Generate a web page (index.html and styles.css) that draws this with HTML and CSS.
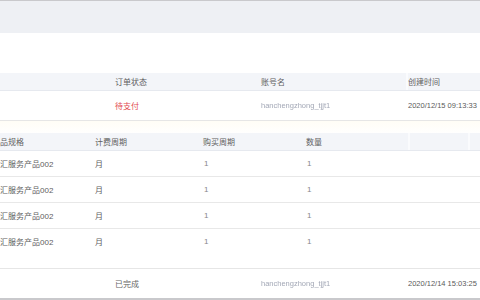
FILE: index.html
```html
<!DOCTYPE html>
<html lang="zh-CN">
<head>
    <meta charset="UTF-8">
    <title>订单列表</title>
    <link rel="stylesheet" href="styles.css">
</head>
<body>
    <div class="topbar"></div>
    <div class="spacer"></div>

    <div class="order-grid head">
        <div></div>
        <div>订单状态</div>
        <div>账号名</div>
        <div class="sep">创建时间</div>
    </div>
    <div class="order-grid row">
        <div></div>
        <div class="unpaid">待支付</div>
        <div><span class="blurred">hanchengzhong_tjjt1</span></div>
        <div class="time">2020/12/15 09:13:33</div>
    </div>

    <div class="detail">
        <div class="item-grid head">
            <div>品规格</div>
            <div>计费周期</div>
            <div>购买周期</div>
            <div>数量</div>
            <div class="sep"></div>
            <div class="sep"></div>
        </div>
        <div class="item-grid row">
            <div>汇服务产品002</div>
            <div>月</div>
            <div class="num">1</div>
            <div class="num">1</div>
            <div></div>
            <div></div>
        </div>
        <div class="item-grid row">
            <div>汇服务产品002</div>
            <div>月</div>
            <div class="num">1</div>
            <div class="num">1</div>
            <div></div>
            <div></div>
        </div>
        <div class="item-grid row">
            <div>汇服务产品002</div>
            <div>月</div>
            <div class="num">1</div>
            <div class="num">1</div>
            <div></div>
            <div></div>
        </div>
        <div class="item-grid row last">
            <div>汇服务产品002</div>
            <div>月</div>
            <div class="num">1</div>
            <div class="num">1</div>
            <div></div>
            <div></div>
        </div>
    </div>

    <div class="order-grid row done">
        <div></div>
        <div>已完成</div>
        <div><span class="blurred">hanchengzhong_tjjt1</span></div>
        <div class="time">2020/12/14 15:03:25</div>
    </div>
    <div class="bottombar"></div>
</body>
</html>
```

FILE: styles.css
```css
body {
    margin: 0;
    font-family: "Liberation Sans", "Noto Sans CJK SC", sans-serif;
    font-size: 8px;
    color: #666;
    background: #ffffff;
    overflow: hidden;
}

.topbar {
    height: 32px;
    border-top: 1px solid #c9c9cc;
    background: #eef0f4;
}

.spacer {
    height: 40px;
}

.order-grid {
    display: grid;
    grid-template-columns: 115px 146px 147px 1fr;
    align-items: center;
}

.item-grid {
    display: grid;
    grid-template-columns: 95px 108px 103px 104px 60px 1fr;
    align-items: center;
}

.head {
    height: 17px;
    background: #f3f5f9;
    border-bottom: 1px solid #e6e9ef;
    color: #5f5f5f;
}

.head > div {
    height: 100%;
    display: flex;
    align-items: center;
}

.head .sep {
    border-left: 2px solid #fafbfd;
    margin-left: -2px;
}

.order-grid.row {
    height: 29px;
    border-bottom: 1px solid #e6e6e6;
}

.order-grid.done {
    height: 29px;
    border-bottom: 2px solid #c9c9cc;
}

.item-grid.row {
    height: 25px;
    border-bottom: 1px solid #e8e8e8;
    color: #5e5e5e;
}

.item-grid.last {
    border-bottom: none;
}

.detail {
    padding: 12px 0 14px;
    background: linear-gradient(#fffdf6, #ffffff 13px);
    border-bottom: 1px solid #e6e6e6;
}

.unpaid {
    color: #e24a50;
}

.time {
    font-size: 7.5px;
    color: #5a5a5a;
}

.blurred {
    font-size: 7.5px;
    color: #a3a8b6;
    filter: blur(0.7px);
}

.num {
    padding-left: 1px;
    color: #888;
}

.bottombar {
    height: 10px;
    background: #eef0f4;
}
```
